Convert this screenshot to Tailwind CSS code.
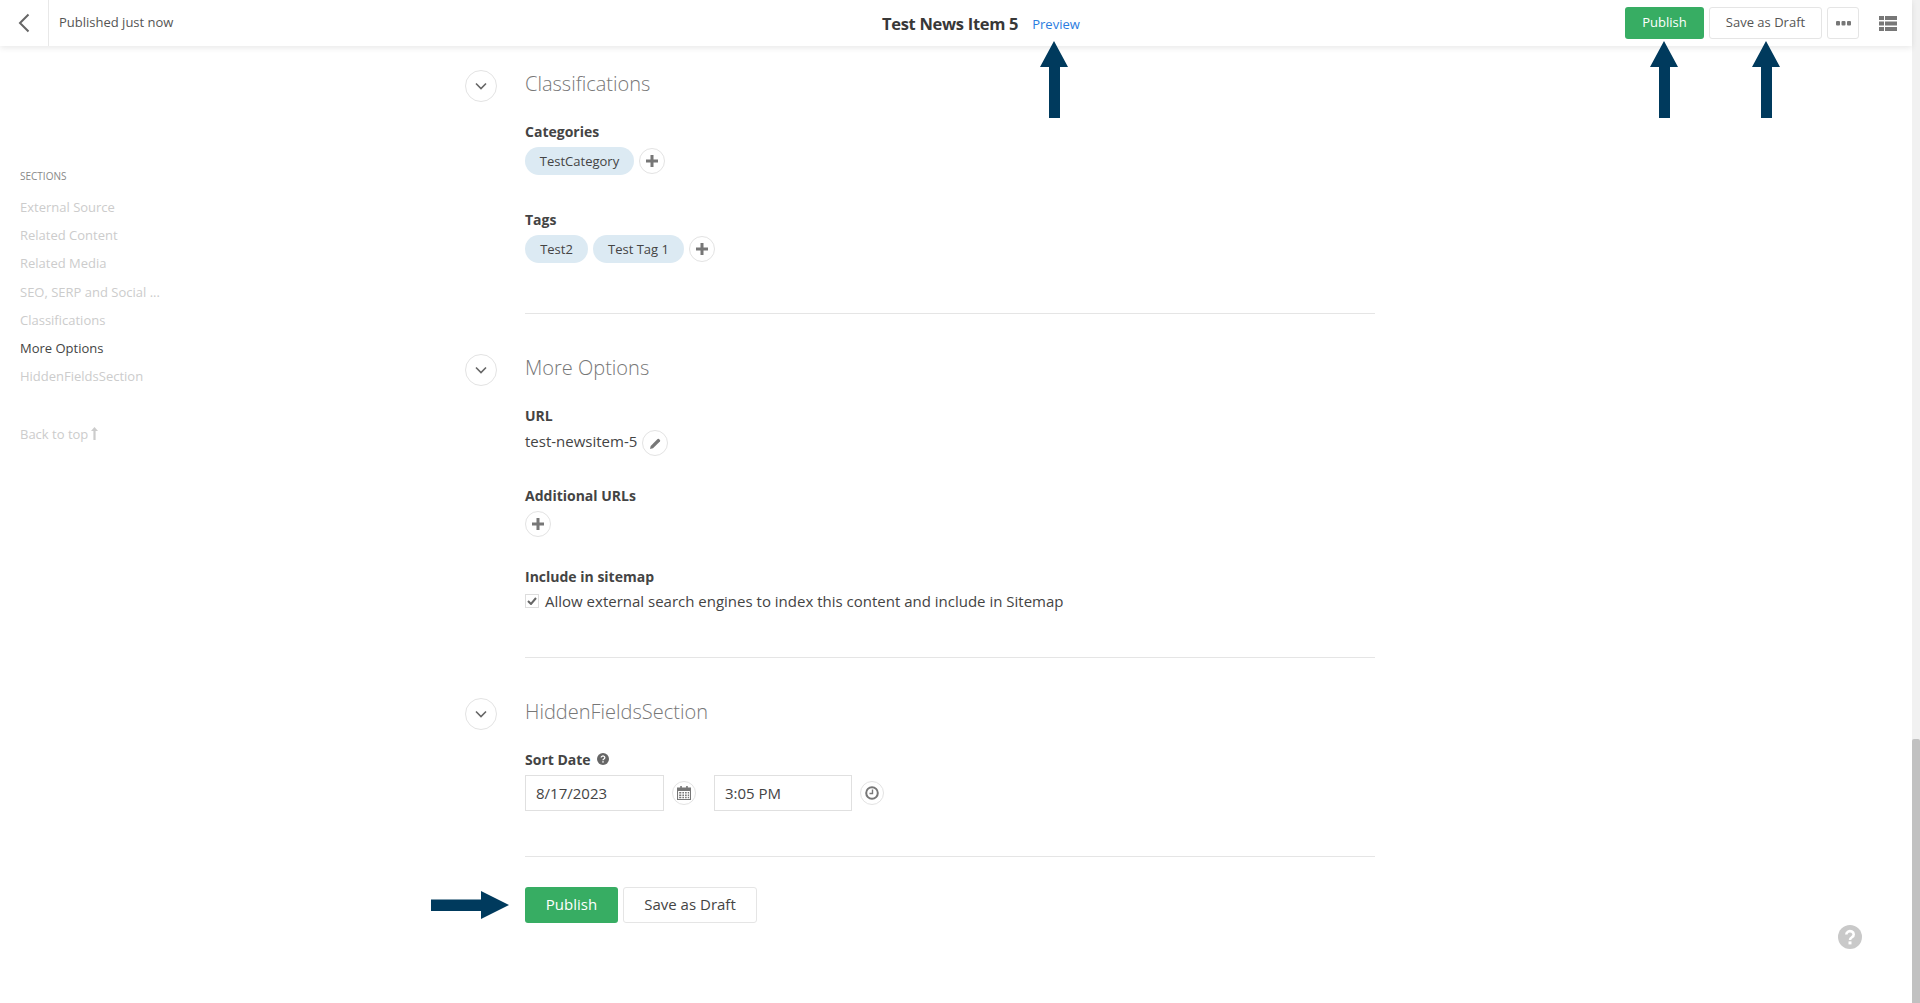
<!DOCTYPE html>
<html lang="en">
<head>
  <meta charset="UTF-8"/>
  <title>Test News Item 5</title>
  <script src="https://cdn.jsdelivr.net/npm/@tailwindcss/browser@4"></script>
</head>
<body class="font-['Open_Sans','Liberation_Sans',sans-serif] text-[#444] bg-white">
<div class="relative flex h-screen overflow-hidden">
  <div class="flex-1 min-w-0 flex flex-col">

    <!-- Top bar -->
    <header class="relative z-10 h-[46px] flex items-center bg-white shadow-[0_2px_6px_rgba(0,0,0,0.09)]">
      <div class="w-[49px] h-full flex items-center justify-center border-r border-[#e8e8e8]">
        <svg class="w-[12px] h-[20px]" viewBox="0 0 12 20" fill="none" stroke="#666" stroke-width="2"><path d="M10.5 1.5 2 10l8.5 8.5"/></svg>
      </div>
      <span class="ml-[10px] w-[823px] text-[13px] text-[#555]">Published just now</span>
      <span class="mt-[2px] text-[16.5px] font-bold text-[#383838] tracking-[-0.3px]">Test News Item 5</span>
      <a class="ml-[14px] mt-[4px] text-[13px] text-[#2b7de0]">Preview</a>
      <div class="ml-auto flex items-center gap-[5px]">
        <button class="h-[32px] w-[79px] rounded-[3px] bg-[#37ad63] text-white text-[13px] font-medium">Publish</button>
        <button class="h-[32px] w-[113px] rounded-[3px] border border-[#e5e5e5] text-[13px] text-[#555]">Save as Draft</button>
        <button class="h-[32px] w-[32px] rounded-[3px] border border-[#e5e5e5] flex items-center justify-center">
          <svg class="w-[15px] h-[5px]" viewBox="0 0 15 5" fill="#777"><rect width="4" height="4.5" rx="1"/><rect x="5.5" width="4" height="4.5" rx="1"/><rect x="11" width="4" height="4.5" rx="1"/></svg>
        </button>
        <svg class="ml-[15px] mr-[15px] w-[18px] h-[15px]" viewBox="0 0 18 15" fill="#777">
          <rect width="5" height="4"/><rect x="6" width="12" height="4"/>
          <rect y="5.5" width="5" height="4"/><rect x="6" y="5.5" width="12" height="4"/>
          <rect y="11" width="5" height="4"/><rect x="6" y="11" width="12" height="4"/>
        </svg>
      </div>
    </header>

    <div class="flex flex-1 min-h-0">
      <!-- Sections nav -->
      <aside class="w-[465px] shrink-0 pl-[20px] pt-[122px] text-[13px] text-[#ccc]">
        <div class="h-[16px] leading-[16px] text-[10px] text-[#888] uppercase">Sections</div>
        <ul class="mt-[9px]">
          <li class="h-[28.2px] leading-[28px]">External Source</li>
          <li class="h-[28.2px] leading-[28px]">Related Content</li>
          <li class="h-[28.2px] leading-[28px]">Related Media</li>
          <li class="h-[28.2px] leading-[28px]">SEO, SERP and Social ...</li>
          <li class="h-[28.2px] leading-[28px]">Classifications</li>
          <li class="h-[28.2px] leading-[28px] text-[#444]">More Options</li>
          <li class="h-[28.2px] leading-[28px]">HiddenFieldsSection</li>
        </ul>
        <div class="mt-[33.6px] h-[20px] leading-[20px] flex items-center gap-[3px]">Back to top
          <svg class="w-[7px] h-[13px]" viewBox="0 0 7 13" fill="#ccc"><path d="M3.5 0 7 4H4.6v9H2.4V4H0z"/></svg>
        </div>
      </aside>

      <!-- Form -->
      <main class="flex-1 pt-[24px]">
        <section class="flex gap-[28px]">
          <button class="w-[32px] h-[32px] rounded-full border border-[#e3e3e3] flex items-center justify-center">
            <svg class="w-[12px] h-[8px]" viewBox="0 0 12 8" fill="none" stroke="#666" stroke-width="1.6"><path d="M1 1.5 6 6.5l5-5"/></svg>
          </button>
          <div class="w-[850px]">
            <h2 class="h-[28px] leading-[28px] text-[20px] font-light text-[#777]">Classifications</h2>
            <div class="mt-[24px] h-[20px] leading-[20px] text-[14px] font-bold text-[#444]">Categories</div>
            <div class="mt-[5px] flex items-center gap-[5px]">
              <span class="h-[28px] leading-[28px] w-[109px] text-center rounded-full bg-[#dceaf3] text-[13px]">TestCategory</span>
              <button class="w-[26px] h-[26px] rounded-full border border-[#e3e3e3] flex items-center justify-center">
                <svg class="w-[12px] h-[12px]" viewBox="0 0 12 12" fill="#777"><path d="M4.5 0h3v4.5H12v3H7.5V12h-3V7.5H0v-3h4.5z"/></svg>
              </button>
            </div>
            <div class="mt-[35px] h-[20px] leading-[20px] text-[14px] font-bold text-[#444]">Tags</div>
            <div class="mt-[5px] flex items-center gap-[5px]">
              <span class="h-[28px] leading-[28px] w-[63px] text-center rounded-full bg-[#dceaf3] text-[13px]">Test2</span>
              <span class="h-[28px] leading-[28px] w-[91px] text-center rounded-full bg-[#dceaf3] text-[13px]">Test Tag 1</span>
              <button class="w-[26px] h-[26px] rounded-full border border-[#e3e3e3] flex items-center justify-center">
                <svg class="w-[12px] h-[12px]" viewBox="0 0 12 12" fill="#777"><path d="M4.5 0h3v4.5H12v3H7.5V12h-3V7.5H0v-3h4.5z"/></svg>
              </button>
            </div>
            <hr class="mt-[50px] border-[#e5e5e5]"/>
          </div>
        </section>

        <section class="mt-[40px] flex gap-[28px]">
          <button class="w-[32px] h-[32px] rounded-full border border-[#e3e3e3] flex items-center justify-center">
            <svg class="w-[12px] h-[8px]" viewBox="0 0 12 8" fill="none" stroke="#666" stroke-width="1.6"><path d="M1 1.5 6 6.5l5-5"/></svg>
          </button>
          <div class="w-[850px]">
            <h2 class="h-[28px] leading-[28px] text-[20px] font-light text-[#777]">More Options</h2>
            <div class="mt-[24px] h-[20px] leading-[20px] text-[14px] font-bold text-[#444]">URL</div>
            <div class="mt-[4px] h-[26px] flex items-center gap-[5px]">
              <span class="mb-[4px] text-[15px]">test-newsitem-5</span>
              <button class="w-[26px] h-[26px] rounded-full border border-[#e3e3e3] flex items-center justify-center">
                <svg class="w-[11px] h-[11px]" viewBox="0 0 11 11" fill="#777"><path d="M0 11l.7-3L7.6 1.1a1 1 0 0 1 1.4 0l.9.9a1 1 0 0 1 0 1.4L3 10.3z"/></svg>
              </button>
            </div>
            <div class="mt-[30px] h-[20px] leading-[20px] text-[14px] font-bold text-[#444]">Additional URLs</div>
            <button class="mt-[5px] w-[26px] h-[26px] rounded-full border border-[#e3e3e3] flex items-center justify-center">
              <svg class="w-[12px] h-[12px]" viewBox="0 0 12 12" fill="#777"><path d="M4.5 0h3v4.5H12v3H7.5V12h-3V7.5H0v-3h4.5z"/></svg>
            </button>
            <div class="mt-[30px] h-[20px] leading-[20px] text-[14px] font-bold text-[#444]">Include in sitemap</div>
            <label class="mt-[4px] h-[20px] flex items-center gap-[6px] text-[15px]">
              <span class="w-[14px] h-[14px] border border-[#ddd] flex items-center justify-center">
                <svg class="w-[10px] h-[8px]" viewBox="0 0 10 8" fill="none" stroke="#666" stroke-width="2"><path d="M1 4l3 3 5-6"/></svg>
              </span>
              Allow external search engines to index this content and include in Sitemap
            </label>
            <hr class="mt-[46px] border-[#e5e5e5]"/>
          </div>
        </section>

        <section class="mt-[40px] flex gap-[28px]">
          <button class="w-[32px] h-[32px] rounded-full border border-[#e3e3e3] flex items-center justify-center">
            <svg class="w-[12px] h-[8px]" viewBox="0 0 12 8" fill="none" stroke="#666" stroke-width="1.6"><path d="M1 1.5 6 6.5l5-5"/></svg>
          </button>
          <div class="w-[850px]">
            <h2 class="h-[28px] leading-[28px] text-[20px] font-light text-[#777]">HiddenFieldsSection</h2>
            <div class="mt-[23px] h-[20px] flex items-center gap-[6px] text-[14px] font-bold text-[#444]">Sort Date
              <svg class="w-[12px] h-[12px]" viewBox="0 0 12 12"><circle cx="6" cy="6" r="6" fill="#666"/><path d="M4.2 4.6a1.8 1.6 0 1 1 2.7 1.4c-.6.4-.9.6-.9 1.2" fill="none" stroke="#fff" stroke-width="1.3"/><rect x="5.3" y="8.2" width="1.4" height="1.4" fill="#fff"/></svg>
            </div>
            <div class="mt-[6px] flex items-center">
              <input value="8/17/2023" class="w-[139px] h-[36px] pl-[10px] border border-[#e0e0e0] text-[15px] text-[#444]"/>
              <button class="ml-[8px] w-[24px] h-[24px] rounded-full border border-[#e3e3e3] flex items-center justify-center">
                <svg class="w-[14px] h-[14px]" viewBox="0 0 13 13" fill="#777"><path d="M3 0h1.5v2H3zm5.500 0H10v2H8.500zM0 1.500h13V13H0zm1 3.200V12h11V4.700z"/><path d="M2 5.500h2v1.500H2zm3 0h1.500v1.500H5zm2.500 0H9v1.500H7.500zm2.500 0h1.200v1.500H10zM2 8h2v1.500H2zm3 0h1.500v1.500H5zm2.500 0H9v1.500H7.500zM10 8h1.200v1.500H10zM2 10.200h2v1.200H2zm3 0h1.500v1.200H5zm2.500 0H9v1.200H7.500zm2.500 0h1.200v1.200H10z"/></svg>
              </button>
              <input value="3:05 PM" class="ml-[18px] w-[138px] h-[36px] pl-[10px] border border-[#e0e0e0] text-[15px] text-[#444]"/>
              <button class="ml-[8px] w-[24px] h-[24px] rounded-full border border-[#e3e3e3] flex items-center justify-center">
                <svg class="w-[14px] h-[14px]" viewBox="0 0 14 14" fill="none" stroke="#777" stroke-width="2"><circle cx="7" cy="7" r="5.800"/><path d="M7.500 3.500V7.500H4.500" stroke-width="1.400"/></svg>
              </button>
            </div>
            <hr class="mt-[45px] border-[#e5e5e5]"/>
            <div class="mt-[30px] flex gap-[5px]">
              <button class="w-[93px] h-[36px] pb-[2px] rounded-[3px] bg-[#37ad63] text-white text-[15px] font-medium">Publish</button>
              <button class="w-[134px] h-[36px] pb-[2px] rounded-[3px] border border-[#e5e5e5] text-[15px] text-[#444]">Save as Draft</button>
            </div>
          </div>
        </section>
      </main>
    </div>
  </div>

  <!-- Scrollbar -->
  <div class="w-[8px] shrink-0 bg-[#f1f1f1] flex flex-col justify-end">
    <div class="h-[264px] bg-[#c1c1c1] rounded-t-[2px]"></div>
  </div>

  <!-- Annotation arrows -->
  <svg class="absolute z-20 left-[1040px] top-[41px] w-[28px] h-[77px]" viewBox="0 0 28 77" fill="#003a5d"><path d="M14 0 28 26H20V77H9V26H0z"/></svg>
  <svg class="absolute z-20 left-[1650px] top-[41px] w-[28px] h-[77px]" viewBox="0 0 28 77" fill="#003a5d"><path d="M14 0 28 26H20V77H9V26H0z"/></svg>
  <svg class="absolute z-20 left-[1752px] top-[41px] w-[28px] h-[77px]" viewBox="0 0 28 77" fill="#003a5d"><path d="M14 0 28 26H20V77H9V26H0z"/></svg>
  <svg class="absolute z-20 left-[431px] top-[891px] w-[78px] h-[28px]" viewBox="0 0 78 28" fill="#003a5d"><path d="M78 14 50 28V20H0V8.500H50V0z"/></svg>

  <!-- Help bubble -->
  <svg class="absolute left-[1838px] top-[925px] w-[24px] h-[24px]" viewBox="0 0 24 24"><circle cx="12" cy="12" r="12" fill="#c9c9c9"/><path d="M8.300 9.400a3.700 3.300 0 1 1 5.700 2.800c-1.200.8-2 1.300-2 2.700" fill="none" stroke="#fff" stroke-width="2.600"/><rect x="10.500" y="16.400" width="3" height="3" fill="#fff"/></svg>
</div>
</body>
</html>
